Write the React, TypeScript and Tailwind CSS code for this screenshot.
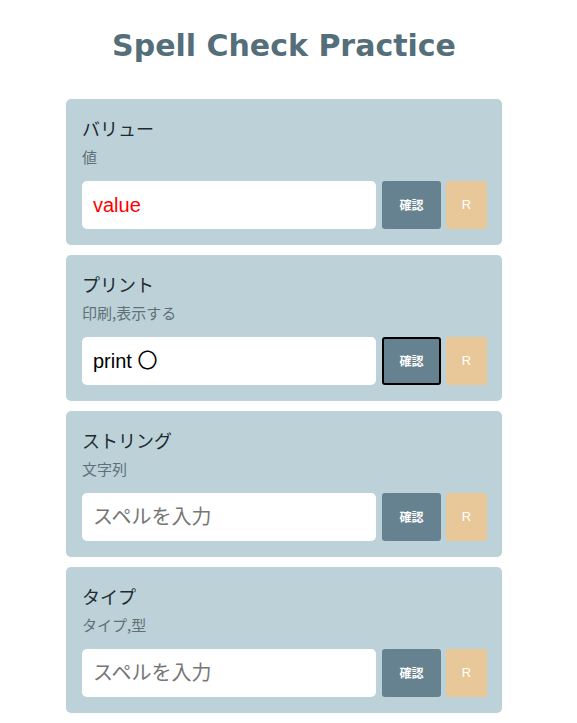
import { useState } from 'react';

type Word = {
  katakana: string;
  meaning: string;
  value: string;
  status: 'wrong' | 'right' | 'none';
  focused?: boolean;
};

const words: Word[] = [
  { katakana: 'バリュー', meaning: '値', value: 'value', status: 'wrong' },
  { katakana: 'プリント', meaning: '印刷,表示する', value: 'print 〇', status: 'right', focused: true },
  { katakana: 'ストリング', meaning: '文字列', value: '', status: 'none' },
  { katakana: 'タイプ', meaning: 'タイプ,型', value: '', status: 'none' },
];

const jp = "font-['Noto_Sans_CJK_JP',sans-serif]";

function WordCard({ word }: { word: Word }) {
  const [text, setText] = useState(word.value);
  return (
    <div className="w-[436px] mx-auto rounded-[5px] bg-[#bdd1d8] px-4 pt-4 pb-4">
      <div className={`${jp} text-[18px] leading-[27px] text-[#1e2a30]`}>{word.katakana}</div>
      <div className={`${jp} mt-[4px] text-[15px] leading-[22px] text-[#5f7077]`}>{word.meaning}</div>
      <div className="mt-[13px] flex h-12 items-stretch">
        <input
          value={text}
          onChange={(e) => setText(e.target.value)}
          placeholder="スペルを入力"
          className={`w-[294px] shrink-0 rounded-[5px] bg-white pl-[11px] text-[20px] outline-none font-['Liberation_Sans','Noto_Sans_CJK_JP',sans-serif] placeholder:text-[#767676] ${
            word.status === 'wrong' ? 'text-[#ff0000]' : 'text-black'
          }`}
        />
        <button
          className={`${jp} ml-[6px] w-[59px] shrink-0 rounded-[3px] bg-[#668290] text-[12px] font-bold text-white ${
            word.focused ? 'border-2 border-black' : ''
          }`}
        >
          確認
        </button>
        <button className="ml-[5px] w-[41px] shrink-0 rounded-[3px] bg-[#e8c898] font-['Liberation_Sans',sans-serif] text-[13px] text-white">
          R
        </button>
      </div>
    </div>
  );
}

export default function App() {
  return (
    <div className="min-h-[723px] w-[568px] bg-white pt-[22px]">
      <h1 className="text-center font-['DejaVu_Sans',sans-serif] text-[30px] font-bold leading-[48px] text-[#546e7a]">
        Spell Check Practice
      </h1>
      <div className="mt-[29px] flex flex-col gap-[10px]">
        {words.map((w) => (
          <WordCard key={w.katakana} word={w} />
        ))}
      </div>
    </div>
  );
}
